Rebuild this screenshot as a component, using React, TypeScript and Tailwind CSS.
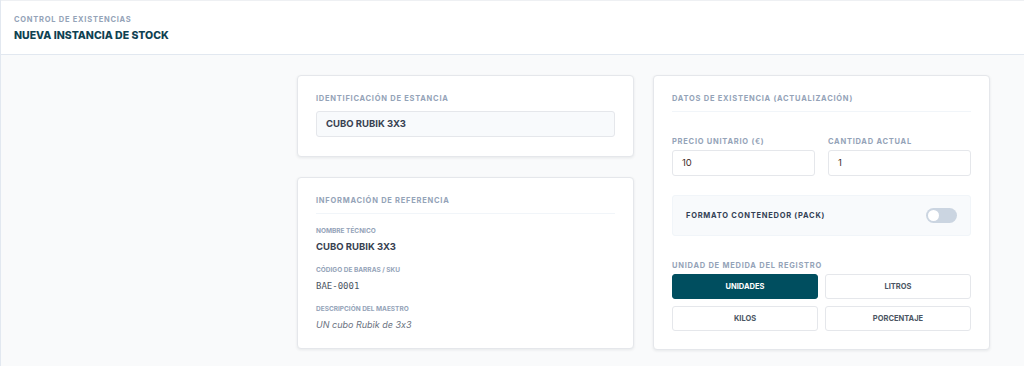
import { useState } from 'react';

const units = ['UNIDADES', 'LITROS', 'KILOS', 'PORCENTAJE'];

function SectionTitle({ children, divider }: { children: string; divider?: boolean }) {
    return (
        <div
            className={`text-[7.5px] leading-[10px] font-bold tracking-[0.1em] text-[#94a3b8] ${
                divider ? 'pb-[7px] border-b border-[#f1f5f9]' : ''
            }`}
        >
            {children}
        </div>
    );
}

function FieldLabel({ children }: { children: string }) {
    return <div className="text-[6.5px] leading-[10px] font-bold text-[#94a3b8]">{children}</div>;
}

export default function App() {
    const [unit, setUnit] = useState('UNIDADES');
    const [pack, setPack] = useState(false);

    return (
        <div
            className="w-[1024px] h-[366px] flex flex-col bg-[#f9fafb] border-l border-[#e2e8f0] overflow-hidden [font-feature-settings:'calt'_0]"
            style={{ fontFamily: 'Inter, "Noto Sans", sans-serif' }}
        >
            {/* Header */}
            <div className="h-[55px] shrink-0 bg-white border-t border-[#eef0f3] border-b border-b-[#e2e8f0] pl-[13px] pt-[14px]">
                <div className="text-[7.5px] leading-[10px] font-bold tracking-[0.1em] text-[#94a3b8]">
                    CONTROL DE EXISTENCIAS
                </div>
                <div className="mt-[4px] text-[10.5px] leading-[14px] font-extrabold text-[#0e4152]">
                    NUEVA INSTANCIA DE STOCK
                </div>
            </div>

            {/* Body */}
            <div className="flex justify-end gap-[19px] pr-[34px] pt-[20px]">
                {/* Left column */}
                <div className="w-[337px] flex flex-col gap-[20px]">
                    <div className="bg-white border border-[#e5e7eb] rounded-[4px] shadow-[0_1px_3px_rgba(15,23,42,0.08)] px-[18px] pt-[18px] pb-[19px]">
                        <SectionTitle>IDENTIFICACIÓN DE ESTANCIA</SectionTitle>
                        <div className="mt-[7px] h-[26px] flex items-center px-[9px] bg-[#f8fafc] border border-[#e5e7eb] rounded-[3px] text-[9.5px] font-bold text-[#374151]">
                            CUBO RUBIK 3X3
                        </div>
                    </div>

                    <div className="bg-white border border-[#e5e7eb] rounded-[4px] shadow-[0_1px_3px_rgba(15,23,42,0.08)] px-[18px] pt-[18px] pb-[16px]">
                        <SectionTitle divider>INFORMACIÓN DE REFERENCIA</SectionTitle>
                        <div className="pt-[12px] flex flex-col gap-[11px]">
                            <div>
                                <FieldLabel>NOMBRE TÉCNICO</FieldLabel>
                                <div className="mt-[4px] text-[9.5px] leading-[14px] font-bold text-[#374151]">CUBO RUBIK 3X3</div>
                            </div>
                            <div>
                                <FieldLabel>CÓDIGO DE BARRAS / SKU</FieldLabel>
                                <div className="mt-[4px] text-[9px] leading-[14px] text-[#4b5563]" style={{ fontFamily: '"DejaVu Sans Mono", monospace' }}>
                                    BAE-0001
                                </div>
                            </div>
                            <div>
                                <FieldLabel>DESCRIPCIÓN DEL MAESTRO</FieldLabel>
                                <div className="mt-[4px] text-[9px] leading-[14px] italic text-[#6b7280]">UN cubo Rubik de 3x3</div>
                            </div>
                        </div>
                    </div>
                </div>

                {/* Right column */}
                <div className="w-[337px] self-start bg-white border border-[#e5e7eb] rounded-[4px] shadow-[0_1px_3px_rgba(15,23,42,0.08)] px-[18px] pt-[18px] pb-[18px]">
                    <SectionTitle divider>DATOS DE EXISTENCIA (ACTUALIZACIÓN)</SectionTitle>

                    <div className="mt-[25px] grid grid-cols-2 gap-[13px]">
                        <div>
                            <SectionTitle>PRECIO UNITARIO (€)</SectionTitle>
                            <div className="mt-[3px] h-[26px] flex items-center px-[9px] bg-white border border-[#e5e7eb] rounded-[3px] text-[9.5px] text-[#3f2d2a]">
                                10
                            </div>
                        </div>
                        <div>
                            <SectionTitle>CANTIDAD ACTUAL</SectionTitle>
                            <div className="mt-[3px] h-[26px] flex items-center px-[9px] bg-white border border-[#e5e7eb] rounded-[3px] text-[9.5px] text-[#3f2d2a]">
                                1
                            </div>
                        </div>
                    </div>

                    <div className="mt-[19px] h-[41px] flex items-center justify-between pl-[13px] pr-[13px] bg-[#f8fafc] border border-[#f1f5f9] rounded-[3px]">
                        <span className="text-[7.5px] font-bold tracking-[0.1em] text-[#334155]">FORMATO CONTENEDOR (PACK)</span>
                        <button
                            onClick={() => setPack(!pack)}
                            className={`w-[31px] h-[15px] rounded-full flex items-center px-[2px] ${pack ? 'bg-[#004e5f] justify-end' : 'bg-[#cbd5e1] justify-start'}`}
                        >
                            <span className="w-[11px] h-[11px] rounded-full bg-white" />
                        </button>
                    </div>

                    <div className="mt-[25px]">
                        <SectionTitle>UNIDAD DE MEDIDA DEL REGISTRO</SectionTitle>
                        <div className="mt-[3px] grid grid-cols-2 gap-[7px]">
                            {units.map((u) => (
                                <button
                                    key={u}
                                    onClick={() => setUnit(u)}
                                    className={`h-[25px] rounded-[3px] text-[7.5px] font-bold ${
                                        unit === u
                                            ? 'bg-[#004e5f] text-white border border-[#004e5f]'
                                            : 'bg-white text-[#4b5563] border border-[#e5e7eb]'
                                    }`}
                                >
                                    {u}
                                </button>
                            ))}
                        </div>
                    </div>
                </div>
            </div>
        </div>
    );
}
